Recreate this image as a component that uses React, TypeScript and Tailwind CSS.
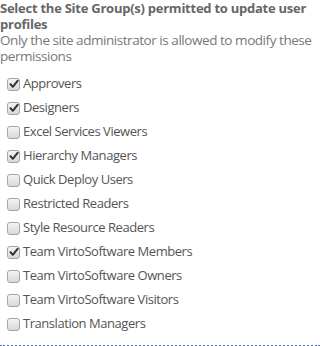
import React from "react";

const groups: { name: string; checked: boolean }[] = [
  { name: "Approvers", checked: true },
  { name: "Designers", checked: true },
  { name: "Excel Services Viewers", checked: false },
  { name: "Hierarchy Managers", checked: true },
  { name: "Quick Deploy Users", checked: false },
  { name: "Restricted Readers", checked: false },
  { name: "Style Resource Readers", checked: false },
  { name: "Team VirtoSoftware Members", checked: true },
  { name: "Team VirtoSoftware Owners", checked: false },
  { name: "Team VirtoSoftware Visitors", checked: false },
  { name: "Translation Managers", checked: false },
];

function Box({ checked }: { checked: boolean }) {
  return (
    <span className="w-[13px] h-[13px] rounded-[3px] border border-[#a6a6a6] bg-gradient-to-b from-[#f4f4f4] to-[#d8d8d8] flex items-center justify-center shrink-0">
      {checked && (
        <svg width="10" height="10" viewBox="0 0 10 10">
          <path d="M1.5 5.2 L3.8 7.8 L8.6 1.8" fill="none" stroke="#333" strokeWidth="2" strokeLinecap="round" strokeLinejoin="round" />
        </svg>
      )}
    </span>
  );
}

export default function App() {
  return (
    <div className="w-[320px] h-[346px] bg-white overflow-hidden font-['Open_Sans',sans-serif]">
      <div className="text-[13px] leading-[16px] font-bold text-[#666] tracking-[-0.25px]">
        Select the Site Group(s) permitted to update user profiles
      </div>
      <div className="text-[13.5px] leading-[16px] text-[#777] tracking-[-0.45px]">
        Only the site administrator is allowed to modify these permissions
      </div>
      <div className="flex flex-col pt-[8px] pl-[7px]">
        {groups.map((g) => (
          <label key={g.name} className="flex items-center gap-[3px] h-[24px] text-[13px] text-[#555] tracking-[-0.45px]">
            <Box checked={g.checked} />
            <span>{g.name}</span>
          </label>
        ))}
      </div>
      <div className="mt-[9px] border-b-2 border-dotted border-[#4a6fc9]" />
    </div>
  );
}
